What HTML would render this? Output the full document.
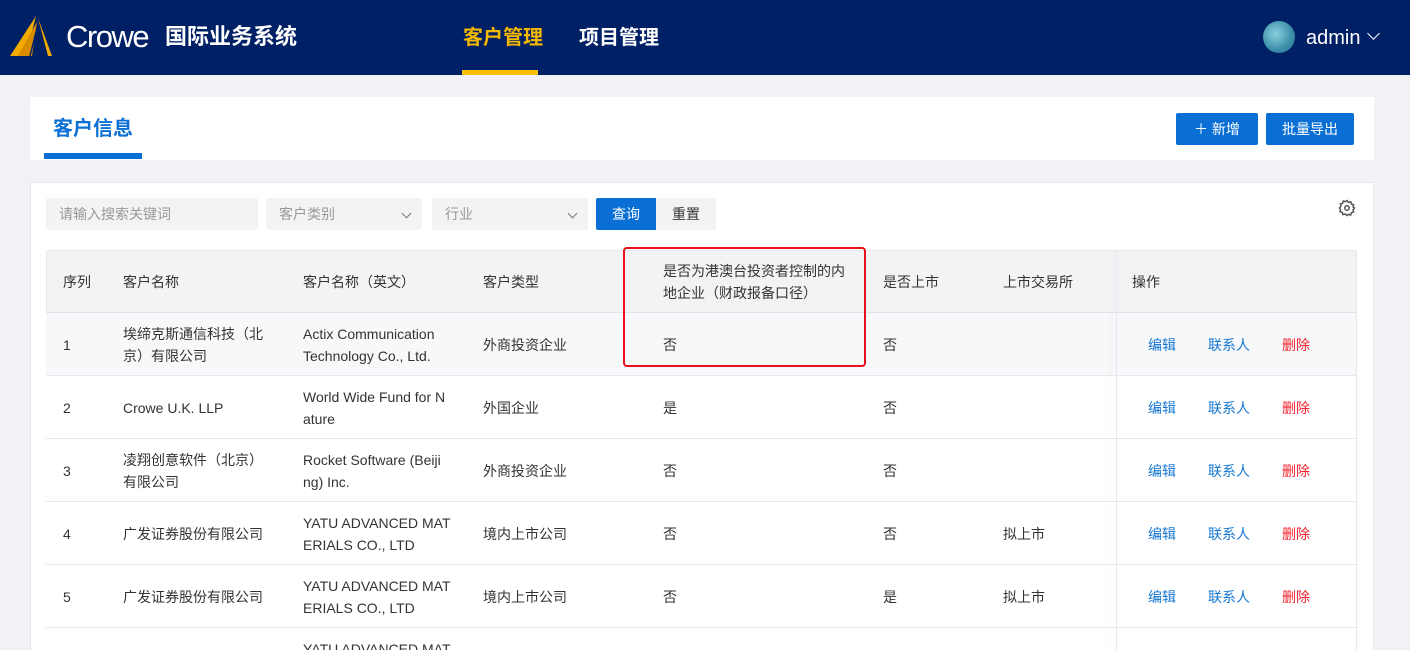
<!DOCTYPE html>
<html><head><meta charset="utf-8"><style>
*{margin:0;padding:0;box-sizing:border-box}
html,body{width:1410px;height:650px;overflow:hidden}
body{background:#f0f2f5;font-family:"Liberation Sans","Noto Sans CJK SC",sans-serif;font-size:14px;color:#333;position:relative}
.abs{position:absolute}
.hdr{left:0;top:0;width:1410px;height:75px;background:#002065}
.t{position:absolute;white-space:nowrap;line-height:22px}
.row{position:absolute;left:46px;width:1311px;height:63px;border-bottom:1px solid #e6e8eb;background:#fff}
.btn{position:absolute;background:#0a6fd4;color:#fff;border-radius:2px;text-align:center;font-size:14px}
.sel{position:absolute;top:198px;height:32px;background:#f2f3f5;border-radius:2px;color:#999;line-height:32px;padding-left:13px}
.chev{position:absolute;right:12px;top:12px;width:7px;height:7px;border-right:1.3px solid #777;border-bottom:1.3px solid #777;transform:rotate(45deg)}
</style></head><body>
<div class="abs hdr"></div>
<svg class="abs" style="left:8px;top:14px" width="50" height="44" viewBox="0 0 50 44">
<polygon points="2,42 28,2 18,42" fill="#f2a900"/>
<polygon points="30,4 44,42 40,42" fill="#f2a900"/>
<polygon points="10,42 29,8 24,42" fill="#d88d00"/>
<line x1="30" y1="10" x2="22" y2="42" stroke="#002065" stroke-width="1.5"/>
<line x1="30" y1="10" x2="30" y2="42" stroke="#002065" stroke-width="1.5"/>
</svg>
<div class="t" style="left:66px;top:19px;font-size:31px;line-height:36px;color:#fff;letter-spacing:-1.5px">Crowe</div>
<div class="t" style="left:165px;top:22px;font-size:22px;line-height:30px;color:#fff;font-weight:bold">国际业务系统</div>
<div class="t" style="left:463px;top:24px;font-size:20px;line-height:28px;color:#f5b800;font-weight:bold">客户管理</div>
<div class="abs" style="left:462px;top:70px;width:76px;height:5px;background:#fdbf00"></div>
<div class="t" style="left:579px;top:24px;font-size:20px;line-height:28px;color:#fff;font-weight:bold">项目管理</div>
<div class="abs" style="left:1263px;top:21px;width:32px;height:32px;border-radius:50%;background:radial-gradient(circle at 40% 40%,#8ad0de,#3a8ea8 60%,#2b6f88)"></div>
<div class="t" style="left:1306px;top:24px;font-size:20px;line-height:28px;color:#fff">admin</div>
<div class="abs" style="left:1369px;top:29px;width:9px;height:9px;border-right:1.6px solid #fff;border-bottom:1.6px solid #fff;transform:rotate(45deg)"></div>

<div class="abs" style="left:30px;top:97px;width:1344px;height:63px;background:#fff"></div>
<div class="t" style="left:53px;top:115px;font-size:20px;line-height:28px;color:#0a6fd4;font-weight:bold">客户信息</div>
<div class="abs" style="left:44px;top:153px;width:98px;height:6px;background:#0a6fd4"></div>
<div class="btn" style="left:1176px;top:113px;width:82px;height:32px;line-height:32px">＋ 新增</div>
<div class="btn" style="left:1266px;top:113px;width:88px;height:32px;line-height:32px">批量导出</div>

<div class="abs" style="left:30px;top:182px;width:1344px;height:468px;background:#fff;border:1px solid #e4e6ea;border-bottom:none"></div>
<div class="sel" style="left:46px;width:212px">请输入搜索关键词</div>
<div class="sel" style="left:266px;width:156px">客户类别<span class="chev"></span></div>
<div class="sel" style="left:432px;width:156px">行业<span class="chev"></span></div>
<div class="btn" style="left:596px;top:198px;width:60px;height:32px;line-height:32px;border-radius:2px 0 0 2px">查询</div>
<div class="abs" style="left:656px;top:198px;width:60px;height:32px;line-height:32px;background:#f2f3f5;text-align:center;color:#333">重置</div>
<svg class="abs" style="left:1338px;top:199px" width="18" height="18" viewBox="0 0 24 24" fill="none" stroke="#555" stroke-width="2"><circle cx="12" cy="12" r="3"/><path d="M12 2l2 2.5 3-.8.8 3 3 .8-.8 3L22 12l-2 2.5.8 3-3 .8-.8 3-3-.8L12 22l-2.5-2-3 .8-.8-3-3-.8.8-3L2 12l2-2.5-.8-3 3-.8.8-3 3 .8z"/></svg>

<div class="abs" style="left:46px;top:250px;width:1311px;height:63px;background:#f2f3f5;border:1px solid #e6e8eb;border-bottom:1px solid #e2e4e8;border-radius:3px 3px 0 0"></div>
<div class="row" style="top:313px;background:#f7f8fa"></div>
<div class="row" style="top:376px"></div>
<div class="row" style="top:439px"></div>
<div class="row" style="top:502px"></div>
<div class="row" style="top:565px"></div>
<div class="row" style="top:628px;height:22px;border-bottom:none"></div>
<div class="abs" style="left:1116px;top:250px;width:1px;height:400px;background:#e6e8eb;box-shadow:-6px 0 8px rgba(0,0,0,0.08)"></div>
<div class="abs" style="left:1356px;top:250px;width:1px;height:400px;background:#e6e8eb"></div>

<div>
<div class="t" style="left:63px;top:271px">序列</div>
<div class="t" style="left:123px;top:271px">客户名称</div>
<div class="t" style="left:303px;top:271px">客户名称（英文）</div>
<div class="t" style="left:483px;top:271px">客户类型</div>
<div class="t" style="left:663px;top:260px">是否为港澳台投资者控制的内</div>
<div class="t" style="left:663px;top:282px">地企业（财政报备口径）</div>
<div class="t" style="left:883px;top:271px">是否上市</div>
<div class="t" style="left:1003px;top:271px">上市交易所</div>
<div class="t" style="left:1132px;top:271px">操作</div>
</div>

<div class="t" style="left:63px;top:334px">1</div>
<div class="t" style="left:123px;top:323px">埃缔克斯通信科技（北</div>
<div class="t" style="left:123px;top:345px">京）有限公司</div>
<div class="t" style="left:303px;top:323px">Actix Communication</div>
<div class="t" style="left:303px;top:345px">Technology Co., Ltd.</div>
<div class="t" style="left:483px;top:334px">外商投资企业</div>
<div class="t" style="left:663px;top:334px">否</div>
<div class="t" style="left:883px;top:334px">否</div>

<div class="t" style="left:63px;top:397px">2</div>
<div class="t" style="left:123px;top:397px">Crowe U.K. LLP</div>
<div class="t" style="left:303px;top:386px">World Wide Fund for N</div>
<div class="t" style="left:303px;top:408px">ature</div>
<div class="t" style="left:483px;top:397px">外国企业</div>
<div class="t" style="left:663px;top:397px">是</div>
<div class="t" style="left:883px;top:397px">否</div>

<div class="t" style="left:63px;top:460px">3</div>
<div class="t" style="left:123px;top:449px">凌翔创意软件（北京）</div>
<div class="t" style="left:123px;top:471px">有限公司</div>
<div class="t" style="left:303px;top:449px">Rocket Software (Beiji</div>
<div class="t" style="left:303px;top:471px">ng) Inc.</div>
<div class="t" style="left:483px;top:460px">外商投资企业</div>
<div class="t" style="left:663px;top:460px">否</div>
<div class="t" style="left:883px;top:460px">否</div>

<div class="t" style="left:63px;top:523px">4</div>
<div class="t" style="left:123px;top:523px">广发证券股份有限公司</div>
<div class="t" style="left:303px;top:512px">YATU ADVANCED MAT</div>
<div class="t" style="left:303px;top:534px">ERIALS CO., LTD</div>
<div class="t" style="left:483px;top:523px">境内上市公司</div>
<div class="t" style="left:663px;top:523px">否</div>
<div class="t" style="left:883px;top:523px">否</div>
<div class="t" style="left:1003px;top:523px">拟上市</div>

<div class="t" style="left:63px;top:586px">5</div>
<div class="t" style="left:123px;top:586px">广发证券股份有限公司</div>
<div class="t" style="left:303px;top:575px">YATU ADVANCED MAT</div>
<div class="t" style="left:303px;top:597px">ERIALS CO., LTD</div>
<div class="t" style="left:483px;top:586px">境内上市公司</div>
<div class="t" style="left:663px;top:586px">否</div>
<div class="t" style="left:883px;top:586px">是</div>
<div class="t" style="left:1003px;top:586px">拟上市</div>
<div class="t" style="left:303px;top:638px">YATU ADVANCED MAT</div>

<div>
<div class="t" style="left:1148px;top:334px;color:#1677d2">编辑</div><div class="t" style="left:1208px;top:334px;color:#1677d2">联系人</div><div class="t" style="left:1282px;top:334px;color:#f5222d">删除</div>
<div class="t" style="left:1148px;top:397px;color:#1677d2">编辑</div><div class="t" style="left:1208px;top:397px;color:#1677d2">联系人</div><div class="t" style="left:1282px;top:397px;color:#f5222d">删除</div>
<div class="t" style="left:1148px;top:460px;color:#1677d2">编辑</div><div class="t" style="left:1208px;top:460px;color:#1677d2">联系人</div><div class="t" style="left:1282px;top:460px;color:#f5222d">删除</div>
<div class="t" style="left:1148px;top:523px;color:#1677d2">编辑</div><div class="t" style="left:1208px;top:523px;color:#1677d2">联系人</div><div class="t" style="left:1282px;top:523px;color:#f5222d">删除</div>
<div class="t" style="left:1148px;top:586px;color:#1677d2">编辑</div><div class="t" style="left:1208px;top:586px;color:#1677d2">联系人</div><div class="t" style="left:1282px;top:586px;color:#f5222d">删除</div>
</div>

<div class="abs" style="left:623px;top:247px;width:243px;height:120px;border:2px solid #e8121b;border-radius:4px"></div>
</body></html>
